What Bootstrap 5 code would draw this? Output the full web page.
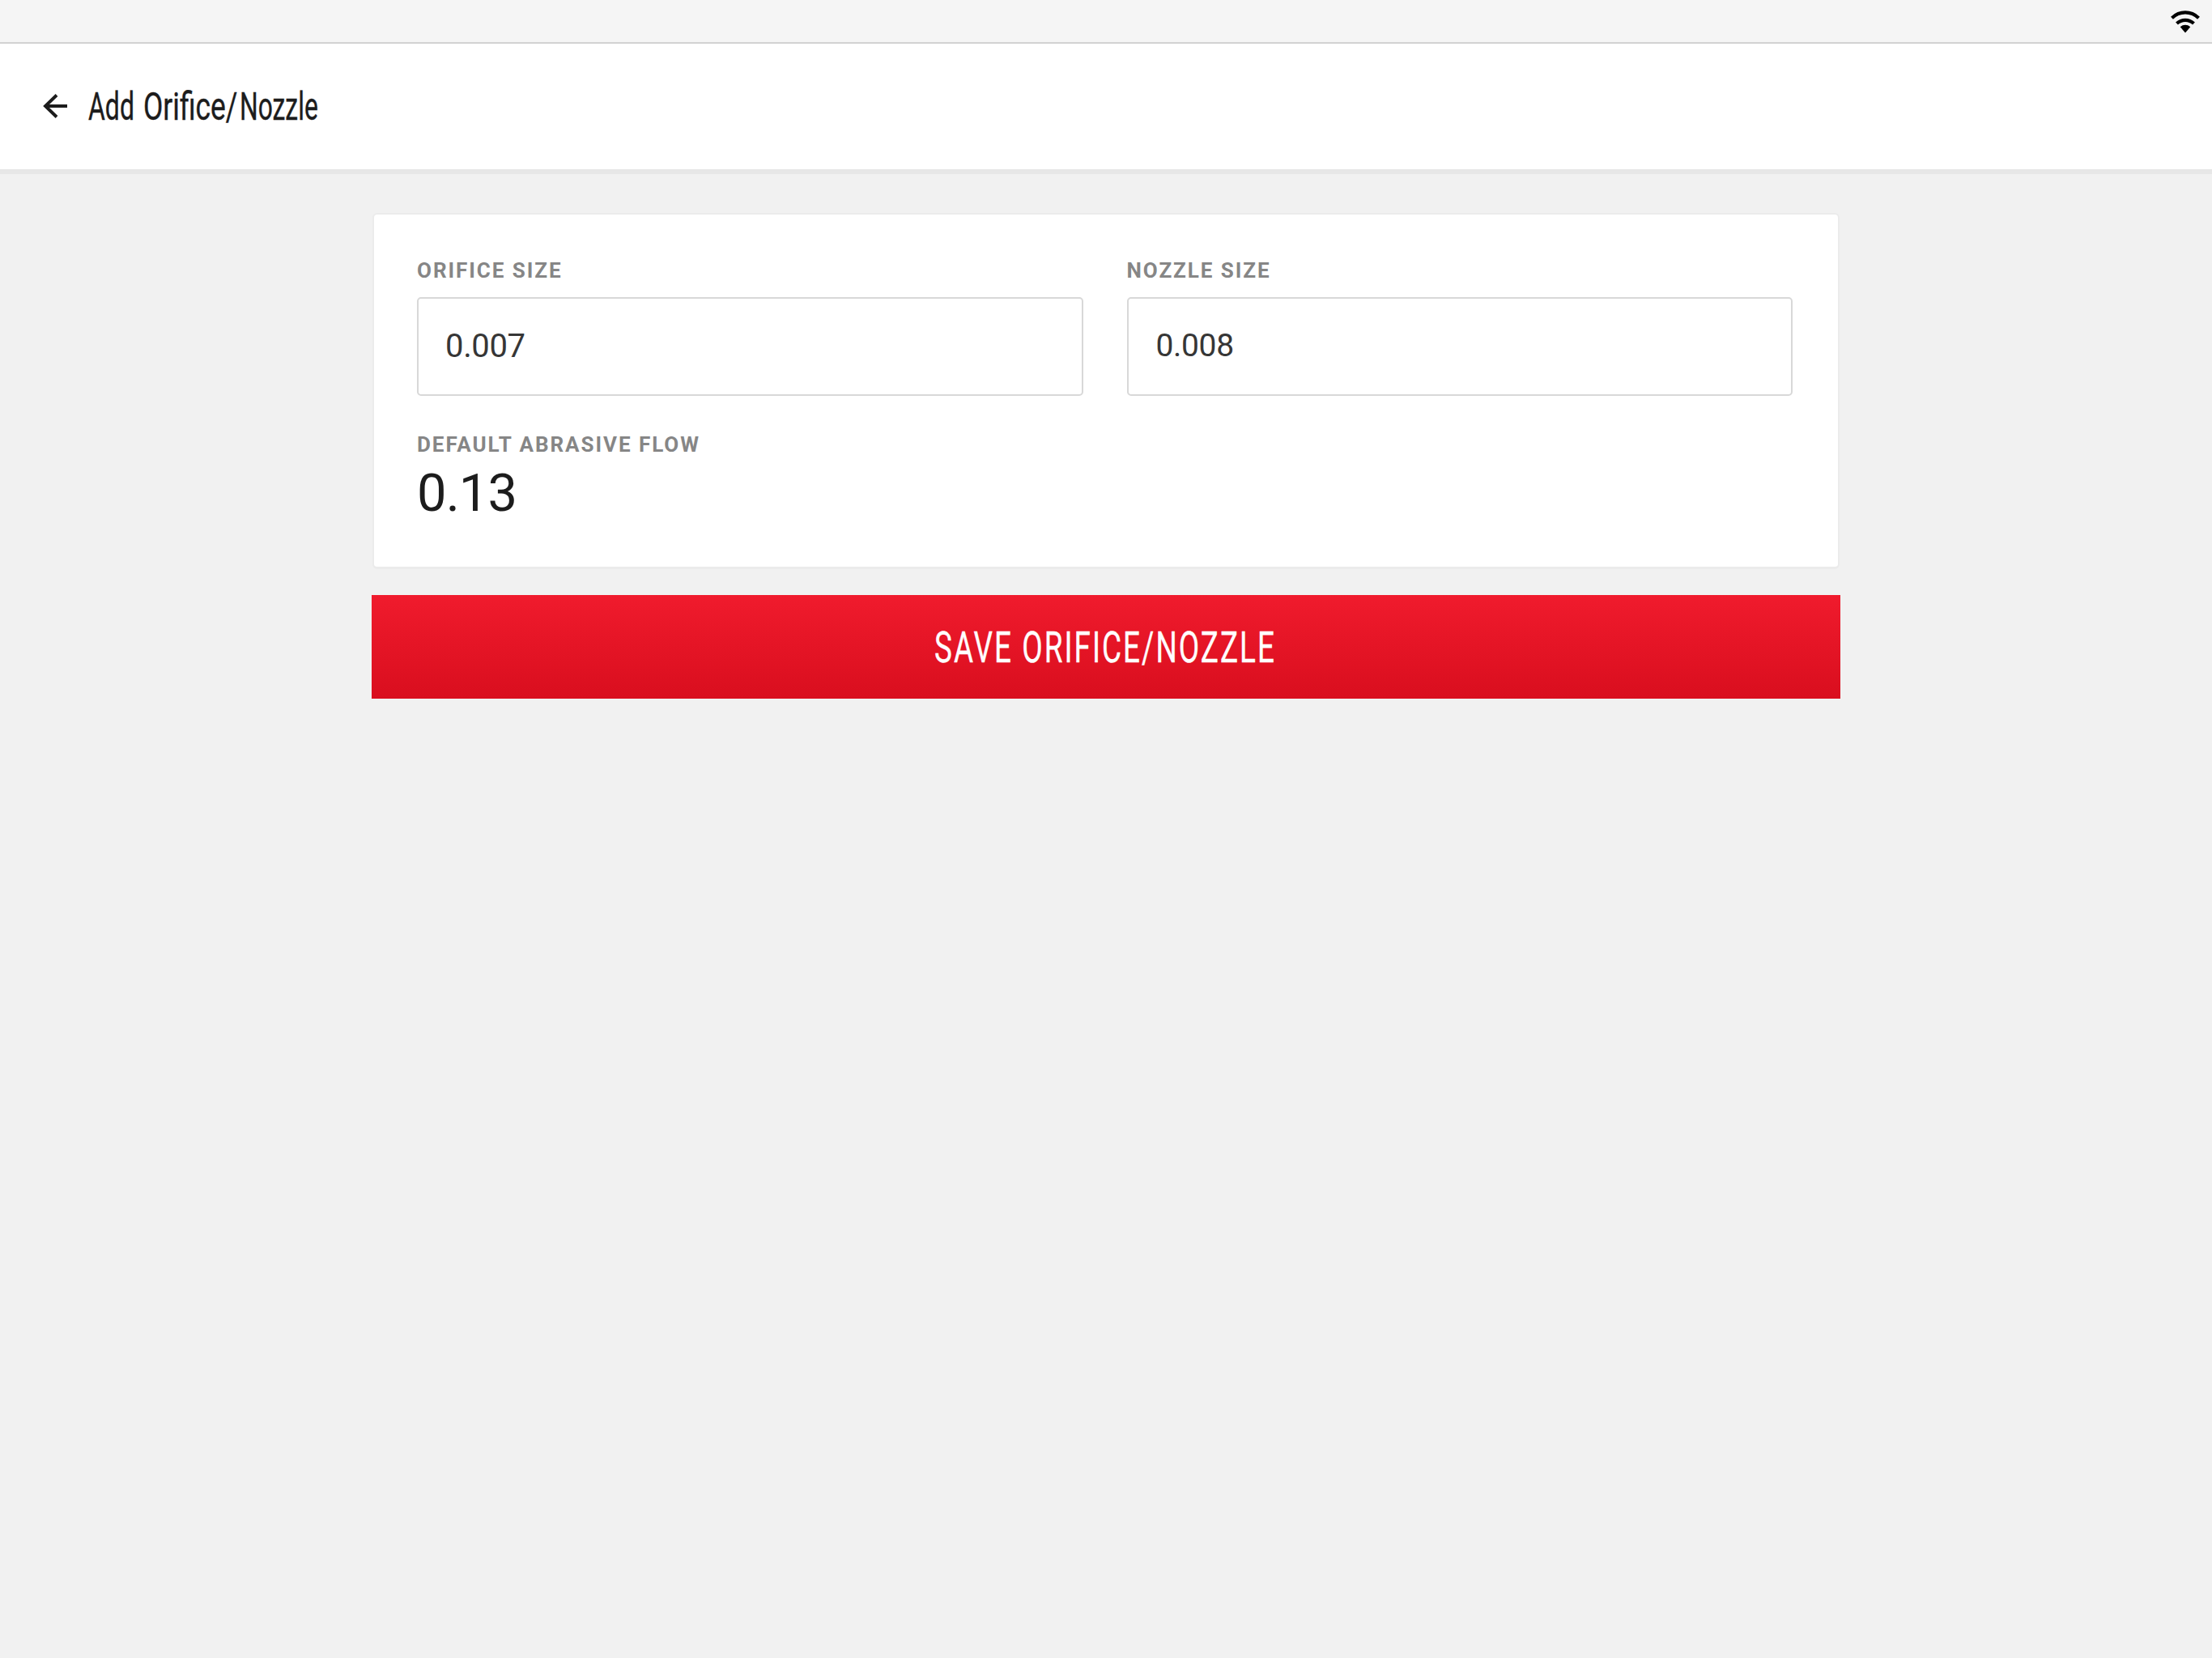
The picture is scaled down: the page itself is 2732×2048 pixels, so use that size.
<!DOCTYPE html>
<html lang="en">
<head>
<meta charset="utf-8">
<title>Add Orifice/Nozzle</title>
<link href="https://cdn.jsdelivr.net/npm/bootstrap@5.3.0/dist/css/bootstrap.min.css" rel="stylesheet">
<style>
body{background:#f1f1f1;font-family:Roboto,"Liberation Sans",sans-serif;color:#1c1c1c;min-height:2048px}
svg{display:block;flex:none}
svg text{font-family:Roboto,"Liberation Sans",sans-serif}
.status-bar{height:54px;background:#f5f5f5;border-bottom:2px solid #d2d2d2;padding:3px 14px 0 0}
.app-bar{height:161px;background:#fff;border-bottom:6px solid #e7e7e7;padding:0 0 2px 53px}
.page-body{width:1814px;margin:48px auto 0}
.form-card{height:440px;border:2px solid #ebebeb;border-bottom:3px solid #ebebeb;border-radius:6px;padding:52px 56px 0 53px;margin:0 1px}
.field-grid{gap:54px}
.field-label{font-size:26px;line-height:34px;font-weight:700;letter-spacing:1.95px;color:#868686;margin:0}
.field-box{height:122px;border:2px solid #d8d8d8;border-radius:5px;margin-top:16px;padding:0 0 0 33px;font-size:40px;line-height:118px;letter-spacing:-.35px;color:#363636;background:#fff;box-shadow:none!important}
.field-box-select{font-size:39px;padding-left:34px;line-height:116px}
.flow-group{margin-top:43px}
.flow-value{font-size:65px;line-height:76px;margin-top:5px;letter-spacing:-.9px}
.save-btn{height:128px;margin-top:32px;border:0;border-radius:0;background:linear-gradient(#f01b2d,#d90e1e);padding:0 0 4px}
</style>
<script src="https://cdn.jsdelivr.net/npm/bootstrap@5.3.0/dist/js/bootstrap.bundle.min.js"></script>
</head>
<body>
<div class="status-bar d-flex justify-content-end align-items-center">
  <svg width="38" height="32" viewBox="0 0 38 32" fill="none" stroke="#000">
    <path d="M2.500 10.200C12 1.200 26 1.200 35.500 10.200" stroke-width="4.200"/>
    <path d="M8.500 17C14.500 11.400 23.500 11.400 29.500 17" stroke-width="4.200"/>
    <path d="M12.700 21.300C16.500 18 21.500 18 25.300 21.300L19 28.400Z" fill="#000" stroke="none"/>
  </svg>
</div>
<header class="app-bar d-flex align-items-center">
  <svg width="30" height="30" viewBox="0 0 30 30" fill="none" stroke="#1c1c1c" stroke-width="3.900"><path d="M30 15H3M17 1.500L3 15L17 28.500"/></svg>
  <h1 class="m-0 ps-4">
    <svg width="290" height="60" viewBox="0 0 290 60" overflow="visible" font-size="48.800" font-weight="400" fill="#1c1c1c" stroke="#1c1c1c" stroke-width=".4">
      <text transform="translate(2 46.500) scale(.655 1)">Add</text>
      <text transform="translate(70 46.500) scale(.725 1)">Orifice/</text>
      <text transform="translate(189 46.500) scale(.652 1)">Nozzle</text>
    </svg>
  </h1>
</header>
<main class="page-body">
  <div class="form-card card">
    <div class="field-grid d-flex">
      <div class="flex-fill w-50">
        <label class="field-label d-block">ORIFICE SIZE</label>
        <div class="field-box form-control">0.007</div>
      </div>
      <div class="flex-fill w-50">
        <label class="field-label d-block">NOZZLE SIZE</label>
        <div class="field-box field-box-select form-control">0.008</div>
      </div>
    </div>
    <div class="flow-group">
      <div class="field-label">DEFAULT ABRASIVE FLOW</div>
      <div class="flow-value">0.13</div>
    </div>
  </div>
  <button type="button" class="save-btn btn w-100 d-flex justify-content-center align-items-center">
    <svg width="424" height="70" viewBox="0 0 424 70" overflow="visible"><text x="0" y="55.500" font-size="54.400" fill="#fff" stroke="#fff" stroke-width=".3" letter-spacing="3" textLength="422" lengthAdjust="spacingAndGlyphs">SAVE ORIFICE/NOZZLE</text></svg>
  </button>
</main>
</body>
</html>
